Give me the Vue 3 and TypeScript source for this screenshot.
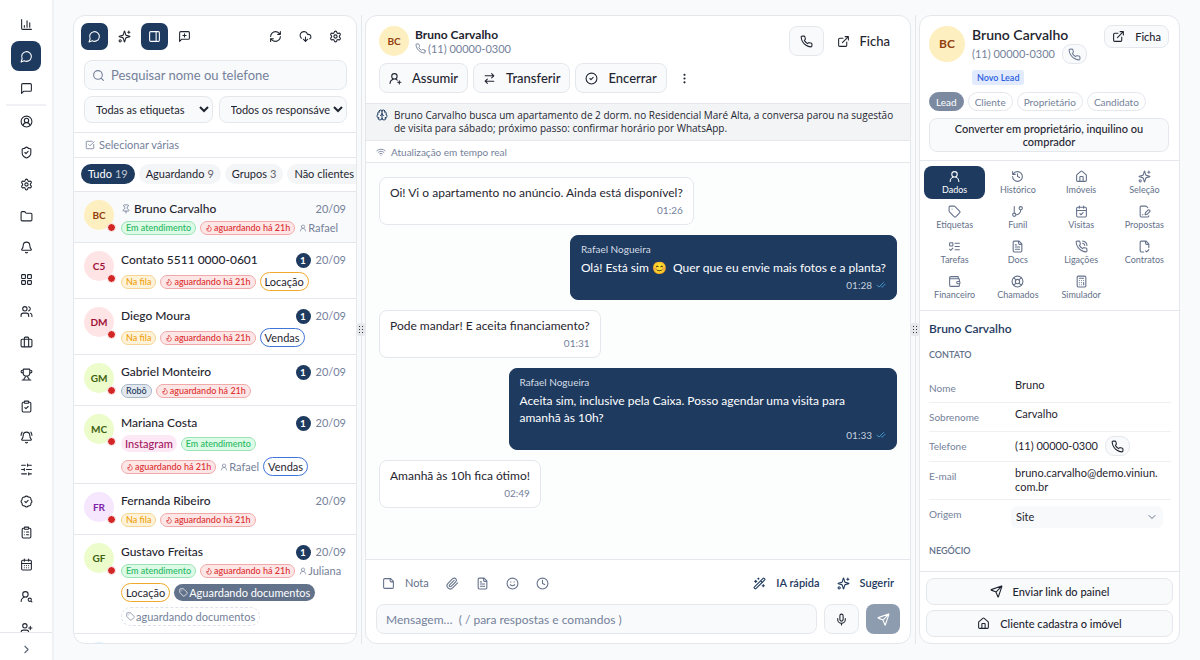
<script setup lang="ts">
import { h, ref } from 'vue'

const circle = (x: number, y: number, r: number): string =>
  `M${x - r} ${y}a${r} ${r} 0 1 0 ${r * 2} 0a${r} ${r} 0 1 0 ${-r * 2} 0`
const box = (x: number, y: number, w: number, t: number, r: number): string =>
  `M${x + r} ${y}h${w - 2 * r}a${r} ${r} 0 0 1 ${r} ${r}v${t - 2 * r}a${r} ${r} 0 0 1 ${-r} ${r}h${2 * r - w}a${r} ${r} 0 0 1 ${-r} ${-r}v${2 * r - t}a${r} ${r} 0 0 1 ${r} ${-r}`

const bubble = 'M21 15a2 2 0 0 1-2 2H7l-4 4V5a2 2 0 0 1 2-2h14a2 2 0 0 1 2 2z'
const clip = box(8, 2, 8, 4, 1) + 'M16 4h2a2 2 0 0 1 2 2v14a2 2 0 0 1-2 2H6a2 2 0 0 1-2-2V6a2 2 0 0 1 2-2h2'
const bell = 'M10.268 21a2 2 0 0 0 3.464 0M3.262 15.326A1 1 0 0 0 4 17h16a1 1 0 0 0 .74-1.673C19.41 13.956 18 12.499 18 8A6 6 0 0 0 6 8c0 4.499-1.411 5.956-2.738 7.326'
const calendar = 'M8 2v4M16 2v4M3 10h18' + box(3, 4, 18, 18, 2)
const phone = 'M22 16.92v3a2 2 0 0 1-2.18 2 19.79 19.79 0 0 1-8.63-3.07 19.5 19.5 0 0 1-6-6 19.79 19.79 0 0 1-3.07-8.67A2 2 0 0 1 4.11 2h3a2 2 0 0 1 2 1.72 12.84 12.84 0 0 0 .7 2.81 2 2 0 0 1-.45 2.11L8.09 9.91a16 16 0 0 0 6 6l1.27-1.27a2 2 0 0 1 2.11-.45 12.84 12.84 0 0 0 2.81.7A2 2 0 0 1 22 16.92z'

const icons: Record<string, string> = {
  chart: 'M3 3v16a2 2 0 0 0 2 2h16M18 17V9M13 17V5M8 17v-3',
  chat: 'M7.9 20A9 9 0 1 0 4 16.1L2 22Z',
  square: bubble,
  squarePlus: bubble + 'M12 7v6M9 10h6',
  account: 'M18 20a6 6 0 0 0-12 0' + circle(12, 10, 4) + circle(12, 12, 10),
  shield: 'M20 13c0 5-3.5 7.5-7.66 8.95a1 1 0 0 1-.67-.01C7.5 20.5 4 18 4 13V6a1 1 0 0 1 1-1c2 0 4.5-1.2 6.24-2.72a1.17 1.17 0 0 1 1.52 0C14.51 3.81 17 5 19 5a1 1 0 0 1 1 1zM9 12l2 2 4-4',
  gear: 'M9.671 4.136a2.34 2.34 0 0 1 4.659 0 2.34 2.34 0 0 0 3.319 1.915 2.34 2.34 0 0 1 2.33 4.033 2.34 2.34 0 0 0 0 3.831 2.34 2.34 0 0 1-2.33 4.033 2.34 2.34 0 0 0-3.319 1.915 2.34 2.34 0 0 1-4.659 0 2.34 2.34 0 0 0-3.32-1.915 2.34 2.34 0 0 1-2.33-4.033 2.34 2.34 0 0 0 0-3.831A2.34 2.34 0 0 1 6.35 6.051a2.34 2.34 0 0 0 3.319-1.915' + circle(12, 12, 3),
  folder: 'M20 20a2 2 0 0 0 2-2V8a2 2 0 0 0-2-2h-7.9a2 2 0 0 1-1.69-.9L9.6 3.9A2 2 0 0 0 7.93 3H4a2 2 0 0 0-2 2v13a2 2 0 0 0 2 2Z',
  bell,
  bellRing: bell + 'M22 8c0-2.3-.8-4.3-2-6M4 2C2.8 3.7 2 5.7 2 8',
  grid: box(3, 3, 7, 7, 1) + box(14, 3, 7, 7, 1) + box(14, 14, 7, 7, 1) + box(3, 14, 7, 7, 1),
  users: 'M16 21v-2a4 4 0 0 0-4-4H6a4 4 0 0 0-4 4v2M22 21v-2a4 4 0 0 0-3-3.87M16 3.13a4 4 0 0 1 0 7.75' + circle(9, 7, 4),
  briefcase: 'M16 20V4a2 2 0 0 0-2-2h-4a2 2 0 0 0-2 2v16' + box(2, 6, 20, 14, 2),
  trophy: 'M10 14.66v1.626a2 2 0 0 1-.976 1.696A5 5 0 0 0 7 21.978M14 14.66v1.626a2 2 0 0 0 .976 1.696A5 5 0 0 1 17 21.978M18 9h1.5a1 1 0 0 0 0-5H18M4 22h16M6 9a6 6 0 0 0 12 0V3a1 1 0 0 0-1-1H7a1 1 0 0 0-1 1zM6 9H4.5a1 1 0 0 1 0-5H6',
  clipCheck: clip + 'M9 14l2 2 4-4',
  clipList: clip + 'M12 11h4M12 16h4M8 11h.01M8 16h.01',
  sliders: 'M21 4h-7M10 4H3M21 12h-9M8 12H3M21 20h-5M12 20H3M14 2v4M8 10v4M16 18v4',
  badge: 'M3.85 8.62a4 4 0 0 1 4.78-4.77 4 4 0 0 1 6.74 0 4 4 0 0 1 4.78 4.78 4 4 0 0 1 0 6.74 4 4 0 0 1-4.77 4.78 4 4 0 0 1-6.75 0 4 4 0 0 1-4.78-4.77 4 4 0 0 1 0-6.76ZM9 12l2 2 4-4',
  calendar: calendar + 'M8 14h.01M12 14h.01M16 14h.01M8 18h.01M12 18h.01M16 18h.01',
  calendarCheck: calendar + 'M9 16l2 2 4-4',
  userSearch: 'M2 21a8 8 0 0 1 10.434-7.62M22 22l-1.9-1.9' + circle(10, 8, 5) + circle(18, 18, 3),
  userAdd: 'M16 21v-2a4 4 0 0 0-4-4H6a4 4 0 0 0-4 4v2M19 8v6M22 11h-6' + circle(9, 7, 4),
  userPlus: 'M2 21a8 8 0 0 1 13.292-6M19 16v6M22 19h-6' + circle(10, 8, 5),
  user: 'M20 21a8 8 0 0 0-16 0' + circle(12, 8, 5),
  chevronRight: 'M9 18l6-6-6-6',
  chevronDown: 'M6 9l6 6 6-6',
  sparkles: 'M9.937 15.5A2 2 0 0 0 8.5 14.063l-6.135-1.582a.5.5 0 0 1 0-.962L8.5 9.936A2 2 0 0 0 9.937 8.5l1.582-6.135a.5.5 0 0 1 .963 0L14.063 8.5A2 2 0 0 0 15.5 9.937l6.135 1.581a.5.5 0 0 1 0 .964L15.5 14.063a2 2 0 0 0-1.437 1.437l-1.582 6.135a.5.5 0 0 1-.963 0zM20 2v4M22 4h-4' + circle(4, 20, 2),
  panel: box(3, 3, 18, 18, 2) + 'M15 3v18',
  refresh: 'M3 12a9 9 0 0 1 9-9 9.75 9.75 0 0 1 6.74 2.74L21 8M21 3v5h-5M21 12a9 9 0 0 1-9 9 9.75 9.75 0 0 1-6.74-2.74L3 16M8 16H3v5',
  cloud: 'M12 13v8l-4-4M12 21l4-4M4.393 15.269A7 7 0 1 1 15.71 8h1.79a4.5 4.5 0 0 1 2.436 8.284',
  search: circle(11, 11, 8) + 'M21 21l-4.3-4.3',
  select: 'M21 10.5V19a2 2 0 0 1-2 2H5a2 2 0 0 1-2-2V5a2 2 0 0 1 2-2h12.5M9 11l3 3L22 4',
  pin: 'M12 17v5M9 10.76a2 2 0 0 1-1.11 1.79l-1.78.9A2 2 0 0 0 5 15.24V16a1 1 0 0 0 1 1h12a1 1 0 0 0 1-1v-.76a2 2 0 0 0-1.11-1.79l-1.78-.9A2 2 0 0 1 15 10.76V7a1 1 0 0 1 1-1 2 2 0 0 0 0-4H8a2 2 0 0 0 0 4 1 1 0 0 1 1 1z',
  flame: 'M8.5 14.5A2.5 2.5 0 0 0 11 12c0-1.38-.5-2-1-3-1.072-2.143-.224-4.054 2-6 .5 2.5 2 4.9 4 6.5 2 1.6 3 3.5 3 5.5a7 7 0 1 1-14 0c0-1.153.433-2.294 1-3a2.5 2.5 0 0 0 2.5 2.5z',
  tag: 'M12.586 2.586A2 2 0 0 0 11.172 2H4a2 2 0 0 0-2 2v7.172a2 2 0 0 0 .586 1.414l8.704 8.704a2.426 2.426 0 0 0 3.42 0l6.58-6.58a2.426 2.426 0 0 0 0-3.42zM7.5 7.5h.01',
  phone,
  phoneCall: phone + 'M14.05 2a9 9 0 0 1 8 7.94M14.05 6A5 5 0 0 1 18 10',
  external: 'M15 3h6v6M10 14 21 3M18 13v6a2 2 0 0 1-2 2H5a2 2 0 0 1-2-2V8a2 2 0 0 1 2-2h6',
  swap: 'M16 3l4 4-4 4M20 7H4M8 21l-4-4 4-4M4 17h16',
  done: circle(12, 12, 10) + 'M9 12l2 2 4-4',
  more: circle(12, 5, 1) + circle(12, 12, 1) + circle(12, 19, 1),
  brain: 'M12 18V5M15 13a4.17 4.17 0 0 1-3-4 4.17 4.17 0 0 1-3 4M17.598 6.5A3 3 0 1 0 12 5a3 3 0 1 0-5.598 1.5M17.997 5.125a4 4 0 0 1 2.526 5.77M18 18a4 4 0 0 0 2-7.464M19.967 17.483A4 4 0 1 1 12 18a4 4 0 1 1-7.967-.517M6 18a4 4 0 0 1-2-7.464M6.003 5.125a4 4 0 0 0-2.526 5.77',
  wifi: 'M12 20h.01M2 8.82a15 15 0 0 1 20 0M5 12.859a10 10 0 0 1 14 0M8.5 16.429a5 5 0 0 1 7 0',
  checks: 'M18 6 7 17l-5-5M22 10l-7.5 7.5L13 16',
  note: 'M16 3H5a2 2 0 0 0-2 2v14a2 2 0 0 0 2 2h14a2 2 0 0 0 2-2V8ZM15 3v4a2 2 0 0 0 2 2h4',
  paperclip: 'M21.44 11.05l-9.19 9.19a6 6 0 0 1-8.49-8.49l8.57-8.57A4 4 0 1 1 18 8.84l-8.59 8.57a2 2 0 0 1-2.83-2.83l8.49-8.48',
  file: 'M15 2H6a2 2 0 0 0-2 2v16a2 2 0 0 0 2 2h12a2 2 0 0 0 2-2V7ZM14 2v4a2 2 0 0 0 2 2h4M10 9H8M16 13H8M16 17H8',
  smile: circle(12, 12, 10) + 'M8 14s1.5 2 4 2 4-2 4-2M9 9h.01M15 9h.01',
  clock: circle(12, 12, 10) + 'M12 6v6l4 2',
  wand: 'M21.64 3.64l-1.28-1.28a1.21 1.21 0 0 0-1.72 0L2.36 18.64a1.21 1.21 0 0 0 0 1.72l1.28 1.28a1.2 1.2 0 0 0 1.72 0L21.64 5.36a1.2 1.2 0 0 0 0-1.72M14 7l3 3M5 6v4M19 14v4M10 2v2M7 8H3M21 16h-4M11 3H9',
  mic: 'M12 2a3 3 0 0 0-3 3v7a3 3 0 0 0 6 0V5a3 3 0 0 0-3-3ZM19 10v2a7 7 0 0 1-14 0v-2M12 19v3',
  send: 'M14.536 21.686a.5.5 0 0 0 .937-.024l6.5-19a.496.496 0 0 0-.635-.635l-19 6.5a.5.5 0 0 0-.024.937l7.93 3.18a2 2 0 0 1 1.112 1.11zM21.854 2.147l-10.94 10.939',
  history: 'M3 12a9 9 0 1 0 9-9 9.75 9.75 0 0 0-6.74 2.74L3 8M3 3v5h5M12 7v5l4 2',
  house: 'M15 21v-8a1 1 0 0 0-1-1h-4a1 1 0 0 0-1 1v8M3 10a2 2 0 0 1 .709-1.528l7-5.999a2 2 0 0 1 2.582 0l7 5.999A2 2 0 0 1 21 10v9a2 2 0 0 1-2 2H5a2 2 0 0 1-2-2z',
  branch: 'M6 3v12M18 9a9 9 0 0 1-9 9' + circle(18, 6, 3) + circle(6, 18, 3),
  filePen: 'M18 5l-2.414-2.414A2 2 0 0 0 14.172 2H6a2 2 0 0 0-2 2v16a2 2 0 0 0 2 2h12a2 2 0 0 0 2-2M21.378 12.626a1 1 0 0 0-3.004-3.004l-4.01 4.012a2 2 0 0 0-.506.854l-.837 2.87a.5.5 0 0 0 .62.62l2.87-.837a2 2 0 0 0 .854-.506zM8 18h1',
  todo: box(3, 5, 6, 6, 1) + 'M3 17l2 2 4-4M13 6h8M13 12h8M13 18h8',
  fileCheck: 'M10.5 22H6a2 2 0 0 1-2-2V4a2 2 0 0 1 2-2h9l5 5v7M14 2v4a2 2 0 0 0 2 2h4M14 20l2 2 4-4',
  wallet: 'M19 7V4a1 1 0 0 0-1-1H5a2 2 0 0 0 0 4h15a1 1 0 0 1 1 1v4h-3a2 2 0 0 0 0 4h3a1 1 0 0 0 1-1v-2a1 1 0 0 0-1-1M3 5v14a2 2 0 0 0 2 2h15a1 1 0 0 0 1-1v-4',
  buoy: circle(12, 12, 10) + circle(12, 12, 4) + 'M4.93 4.93l4.24 4.24M14.83 9.17l4.24-4.24M14.83 14.83l4.24 4.24M9.17 14.83l-4.24 4.24',
  calculator: box(4, 2, 16, 20, 2) + 'M8 6h8M16 14v4M16 10h.01M12 10h.01M8 10h.01M12 14h.01M8 14h.01M12 18h.01M8 18h.01',
}

const Icon = (props: { name: string; size?: number }) =>
  h('svg', { width: props.size ?? 13, height: props.size ?? 13, viewBox: '0 0 24 24', 'aria-hidden': 'true', class: 'icon' }, [
    h('path', { d: icons[props.name] }),
  ])
Icon.props = ['name', 'size']

const navTop = [
  { icon: 'chart', label: 'Painel' },
  { icon: 'chat', label: 'Conversas' },
  { icon: 'square', label: 'Mensagens' },
]
const navMain = ['account', 'shield', 'gear', 'folder', 'bell', 'grid', 'users', 'briefcase', 'trophy', 'clipCheck', 'bellRing', 'sliders', 'badge', 'clipList', 'calendar', 'userSearch', 'userAdd']

interface Tag { kind: string; text: string; icon?: string; size?: number }
interface Chat { initials: string; tone: string; name: string; pinned?: boolean; unread?: number; tags: Tag[] }

const active: Tag = { kind: 'green', text: 'Em atendimento' }
const queue: Tag = { kind: 'amber', text: 'Na fila' }
const waiting: Tag = { kind: 'red', text: 'aguardando há 21h', icon: 'flame', size: 8 }
const agent = (text: string): Tag => ({ kind: 'agent', text, icon: 'user', size: 8 })
const rent: Tag = { kind: 'rent', text: 'Locação' }
const sale: Tag = { kind: 'sale', text: 'Vendas' }

const chats: Chat[] = [
  { initials: 'BC', tone: 'yellow', name: 'Bruno Carvalho', pinned: true, tags: [active, waiting, agent('Rafael')] },
  { initials: 'C5', tone: 'rose', name: 'Contato 5511 0000-0601', unread: 1, tags: [queue, waiting, rent] },
  { initials: 'DM', tone: 'rose', name: 'Diego Moura', unread: 1, tags: [queue, waiting, sale] },
  { initials: 'GM', tone: 'lime', name: 'Gabriel Monteiro', unread: 1, tags: [{ kind: 'robot', text: 'Robô' }, waiting] },
  { initials: 'MC', tone: 'lime', name: 'Mariana Costa', unread: 1, tags: [{ kind: 'insta', text: 'Instagram' }, active, waiting, agent('Rafael'), sale] },
  { initials: 'FR', tone: 'purple', name: 'Fernanda Ribeiro', tags: [queue, waiting] },
  { initials: 'GF', tone: 'lime', name: 'Gustavo Freitas', unread: 1, tags: [active, waiting, agent('Juliana'), rent, { kind: 'solid', text: 'Aguardando documentos', icon: 'tag', size: 9 }, { kind: 'dashed', text: 'aguardando documentos', icon: 'tag', size: 9 }] },
  { initials: '', tone: 'sky', name: '', tags: [] },
]

const filters = [
  { text: 'Tudo', count: 19 },
  { text: 'Aguardando', count: 9 },
  { text: 'Grupos', count: 3 },
  { text: 'Não clientes', count: 1 },
]
const filter = ref('Tudo')

const messages = [
  { text: 'Oi! Vi o apartamento no anúncio. Ainda está disponível?', time: '01:26' },
  { own: true, text: 'Olá! Está sim 😊\u00a0 Quer que eu envie mais fotos e a planta?', time: '01:28' },
  { text: 'Pode mandar! E aceita financiamento?', time: '01:31' },
  { own: true, text: 'Aceita sim, inclusive pela Caixa. Posso agendar uma visita para amanhã às 10h?', time: '01:33' },
  { text: 'Amanhã às 10h fica ótimo!', time: '02:49' },
]

const tabs = [
  ['user', 'Dados'], ['history', 'Histórico'], ['house', 'Imóveis'], ['sparkles', 'Seleção'],
  ['tag', 'Etiquetas'], ['branch', 'Funil'], ['calendarCheck', 'Visitas'], ['filePen', 'Propostas'],
  ['todo', 'Tarefas'], ['file', 'Docs'], ['phoneCall', 'Ligações'], ['fileCheck', 'Contratos'],
  ['wallet', 'Financeiro'], ['buoy', 'Chamados'], ['calculator', 'Simulador'],
]
const tab = ref('Dados')
const roles = ['Lead', 'Cliente', 'Proprietário', 'Candidato']
const query = ref('')
const draft = ref('')
</script>

<template>
  <div class="app">
    <aside class="rail">
      <nav class="rail-nav" aria-label="Principal">
        <div class="rail-top">
          <button v-for="n in navTop" :key="n.icon" class="rail-btn" :class="{ on: n.icon === 'chat' }" :aria-label="n.label"><Icon :name="n.icon" /></button>
        </div>
        <div class="rail-scroll">
          <div class="rail-main">
            <button v-for="n in navMain" :key="n" class="rail-btn" :aria-label="n"><Icon :name="n" /></button>
          </div>
        </div>
      </nav>
      <button class="rail-toggle" aria-label="Expandir"><Icon name="chevronRight" /></button>
    </aside>

    <main class="board">
      <section class="panel inbox">
        <div class="tools">
          <button class="tool on" aria-label="Conversas"><Icon name="chat" /></button>
          <button class="tool" aria-label="IA"><Icon name="sparkles" /></button>
          <button class="tool on" aria-label="Painel lateral"><Icon name="panel" /></button>
          <button class="tool push" aria-label="Nova conversa"><Icon name="squarePlus" /></button>
          <button class="tool" aria-label="Atualizar"><Icon name="refresh" /></button>
          <button class="tool" aria-label="Importar"><Icon name="cloud" /></button>
          <button class="tool" aria-label="Configurações"><Icon name="gear" /></button>
        </div>
        <div class="finder">
          <label class="search"><Icon name="search" /><input v-model="query" type="text" placeholder="Pesquisar nome ou telefone" aria-label="Pesquisar nome ou telefone" /></label>
          <div class="selects">
            <select aria-label="Etiquetas"><option>Todas as etiquetas</option></select>
            <select aria-label="Responsáveis"><option>Todos os responsáveis</option></select>
          </div>
        </div>
        <button class="multi"><Icon name="select" :size="10" />Selecionar várias</button>
        <div class="filters">
          <button v-for="f in filters" :key="f.text" class="filter" :class="{ on: filter === f.text }" @click="filter = f.text">{{ f.text }} <span class="count">{{ f.count }}</span></button>
        </div>
        <ul class="list">
          <li v-for="(c, i) in chats" :key="i" class="chat" :class="{ current: i === 0 }">
            <div class="face"><span class="avatar" :class="c.tone">{{ c.initials }}</span><span v-if="c.name" class="dot"></span></div>
            <div v-if="c.name" class="chat-body">
              <div class="chat-head">
                <Icon v-if="c.pinned" name="pin" :size="10" class="pin" />
                <span class="chat-name">{{ c.name }}</span>
                <span v-if="c.unread" class="unread">{{ c.unread }}</span>
                <time class="date">20/09</time>
              </div>
              <div class="tags">
                <span v-for="t in c.tags" :key="t.kind + t.text" class="tag" :class="t.kind"><Icon v-if="t.icon" :name="t.icon" :size="t.size" />{{ t.text }}</span>
              </div>
            </div>
          </li>
        </ul>
      </section>

      <div class="gutter"><span class="grip"><i v-for="n in 6" :key="n"></i></span></div>

      <section class="panel talk">
        <header class="talk-head">
          <div class="who">
            <span class="avatar yellow">BC</span>
            <div class="who-text">
              <h1 class="who-name">Bruno Carvalho</h1>
              <p class="who-phone"><Icon name="phone" :size="11" />(11) 00000-0300</p>
            </div>
            <button class="btn call" aria-label="Ligar"><Icon name="phone" /></button>
            <button class="plain"><Icon name="external" />Ficha</button>
          </div>
          <div class="actions">
            <button class="btn"><Icon name="userPlus" />Assumir</button>
            <button class="btn"><Icon name="swap" />Transferir</button>
            <button class="btn"><Icon name="done" />Encerrar</button>
            <button class="more" aria-label="Mais"><Icon name="more" /></button>
          </div>
        </header>
        <div class="brief"><Icon name="brain" :size="12" /><p>Bruno Carvalho busca um apartamento de 2 dorm. no Residencial Maré Alta, a conversa parou na sugestão de visita para sábado; próximo passo: confirmar horário por WhatsApp.</p></div>
        <div class="live"><Icon name="wifi" :size="10" />Atualização em tempo real</div>
        <div class="thread">
          <article v-for="m in messages" :key="m.time" class="msg" :class="{ own: m.own }">
            <span v-if="m.own" class="author">Rafael Nogueira</span>
            <p class="msg-text">{{ m.text }}</p>
            <span class="msg-time">{{ m.time }}<Icon v-if="m.own" name="checks" :size="10" class="seen" /></span>
          </article>
        </div>
        <footer class="composer">
          <div class="compose-tools">
            <button class="ctool"><Icon name="note" />Nota</button>
            <button class="ctool" aria-label="Anexar"><Icon name="paperclip" /></button>
            <button class="ctool" aria-label="Modelo"><Icon name="file" /></button>
            <button class="ctool" aria-label="Emoji"><Icon name="smile" /></button>
            <button class="ctool push" aria-label="Agendar"><Icon name="clock" /></button>
            <button class="ctool ai"><Icon name="wand" />IA rápida</button>
            <button class="ctool ai"><Icon name="sparkles" />Sugerir</button>
          </div>
          <div class="compose-row">
            <input v-model="draft" class="draft" type="text" placeholder="Mensagem…  ( / para respostas e comandos )" aria-label="Mensagem" />
            <button class="btn mic" aria-label="Gravar áudio"><Icon name="mic" /></button>
            <button class="btn send" aria-label="Enviar"><Icon name="send" /></button>
          </div>
        </footer>
      </section>

      <div class="gutter"><span class="grip"><i v-for="n in 6" :key="n"></i></span></div>

      <section class="panel record">
        <header class="rec-head">
          <div class="rec-top">
            <span class="avatar big yellow">BC</span>
            <div class="rec-id">
              <h2 class="rec-name">Bruno Carvalho</h2>
              <div class="rec-phone">(11) 00000-0300<button class="pill" aria-label="Ligar"><Icon name="phone" /></button></div>
              <span class="stage">Novo Lead</span>
            </div>
            <button class="btn small"><Icon name="external" />Ficha</button>
          </div>
          <div class="roles"><button v-for="(r, i) in roles" :key="r" class="role" :class="{ on: i === 0 }">{{ r }}</button></div>
          <button class="btn convert">Converter em proprietário, inquilino ou comprador</button>
        </header>
        <div class="tabs">
          <button v-for="t in tabs" :key="t[1]" class="tab" :class="{ on: tab === t[1] }" @click="tab = t[1]"><Icon :name="t[0]" />{{ t[1] }}</button>
        </div>
        <div class="fields">
          <h3 class="fields-title">Bruno Carvalho</h3>
          <h4 class="group">Contato</h4>
          <dl class="rows">
            <div class="row"><dt>Nome</dt><dd>Bruno</dd></div>
            <div class="row"><dt>Sobrenome</dt><dd>Carvalho</dd></div>
            <div class="row"><dt>Telefone</dt><dd class="with-btn">(11) 00000-0300<button class="pill" aria-label="Ligar"><Icon name="phone" /></button></dd></div>
            <div class="row"><dt>E-mail</dt><dd>bruno.carvalho@demo.viniun.<wbr />com.br</dd></div>
            <div class="row last"><dt><label for="origin">Origem</label></dt><dd class="with-select"><select id="origin" class="origin"><option>Site</option></select><Icon name="chevronDown" :size="12" class="caret" /></dd></div>
          </dl>
          <h4 class="group">Negócio</h4>
        </div>
        <footer class="rec-foot">
          <button class="btn"><Icon name="send" />Enviar link do painel</button>
          <button class="btn"><Icon name="house" />Cliente cadastra o imóvel</button>
        </footer>
      </section>
    </main>
  </div>
</template>

<style>
body { margin: 0; background: #f9fafc; }
</style>

<style scoped>
.app, .app * { box-sizing: border-box; }
.app {
  --navy: #1e3a5f;
  --ink: #1f2530;
  --muted: #74819a;
  --line: #e4e7ec;
  display: flex; height: 100vh; overflow: hidden;
  font-family: Lato, "Open Sans", sans-serif; font-size: 11px; line-height: 14px; color: var(--ink);
}
h1, h2, h3, h4, p, ul, dl, dd { margin: 0; padding: 0; }
button, input, select { font: inherit; color: inherit; }
button { display: inline-flex; align-items: center; justify-content: center; padding: 0; border: 0; background: none; white-space: nowrap; cursor: pointer; }
.icon { flex: none; fill: none; stroke: currentColor; stroke-width: 2; stroke-linecap: round; stroke-linejoin: round; }
.push { margin-right: auto; }

.rail { flex: none; width: 54px; display: flex; flex-direction: column; background: #fff; border-right: 2px solid #eff1f4; }
.rail-nav { flex: 1; min-height: 0; display: flex; flex-direction: column; }
.rail-top { flex: none; display: flex; flex-direction: column; align-items: center; gap: 2px; margin: 0 6px; padding: 9px 0 1px; border-bottom: 2px solid #eff1f4; }
.rail-btn { width: 30px; height: 30px; border-radius: 8px; }
.rail-btn.on { background: var(--navy); color: #fff; }
.rail-scroll { flex: 1; min-height: 0; overflow: hidden; }
.rail-main { height: calc(100% + 11px); display: flex; flex-direction: column; justify-content: space-between; align-items: center; }
.rail-toggle { flex: none; height: 28px; border-top: 1px solid var(--line); color: #5b6575; padding-top: 6px; }

.board { flex: 1; min-width: 0; display: grid; grid-template-columns: 284px 8px minmax(0, 1fr) 8px 261px; padding: 15px 20px 16px 19px; }
.panel { min-width: 0; min-height: 0; display: flex; flex-direction: column; overflow: hidden; background: #fff; border: 1px solid var(--line); border-radius: 12px; }
.gutter { display: flex; align-items: center; justify-content: center; background: linear-gradient(var(--line), var(--line)) center / 1px 100% no-repeat; }
.grip { display: grid; grid-template-columns: 1px 1px; gap: 2px; padding: 3px 2px; background: #e6e8ec; border-radius: 2px; }
.grip i { width: 1px; height: 1px; background: #333; }

.tools { display: flex; gap: 3px; padding: 7px 7px 0; }
.tool { width: 27px; height: 27px; border-radius: 7px; }
.tool.on { background: var(--navy); color: #fff; }
.finder { padding: 10px 9px 9px 10px; border-bottom: 1px solid var(--line); }
.search { display: flex; align-items: center; gap: 6px; height: 30px; padding: 0 7px; background: #f9fafc; border: 1px solid var(--line); border-radius: 8px; color: var(--muted); }
.search input { flex: 1; min-width: 0; padding: 0; border: 0; outline: 0; background: none; font-size: 13px; color: var(--ink); }
input::placeholder { color: var(--muted); opacity: 1; }
.selects { display: grid; grid-template-columns: 1fr 1fr; gap: 6px; margin-top: 6px; }
.selects select { min-width: 0; height: 27px; padding: 0 0 0 7px; border: 1px solid var(--line); border-radius: 8px; background-color: #f9fafc; font-size: 11px; }
.multi { flex: none; justify-content: flex-start; gap: 4px; height: 25px; padding: 0 11px; border-bottom: 1px solid var(--line); color: var(--muted); }
.filters { flex: none; display: flex; gap: 4px; height: 34px; padding: 6px 7px; border-bottom: 1px solid var(--line); overflow: hidden; }
.filter { flex: none; height: 20px; padding: 0 7px; gap: 3px; border-radius: 10px; background: #f3f5f7; }
.filter .count { opacity: .7; }
.filter.on { background: var(--navy); color: #fff; }
.list { flex: 1; min-height: 0; overflow: hidden; list-style: none; }
.chat { display: flex; gap: 7px; padding: 7px 10px; border-bottom: 1px solid var(--line); }
.chat.current { background: #f9fafb; }
.face { position: relative; flex: none; width: 30px; height: 31px; padding-top: 1px; }
.avatar { flex: none; display: flex; align-items: center; justify-content: center; width: 30px; height: 30px; border-radius: 50%; font-weight: 700; font-size: 10px; }
.avatar.big { width: 36px; height: 36px; font-size: 12px; }
.yellow { background: #feefc0; color: #92400e; }
.rose { background: #ffe4e6; color: #9f1239; }
.lime { background: #ecfccb; color: #3f6212; }
.purple { background: #f6e7ff; color: #7e22a8; }
.sky { background: #e0f2fe; color: #075985; }
.dot { position: absolute; right: -2px; bottom: -2px; width: 9px; height: 9px; border: 1px solid #fff; border-radius: 50%; background: #d32626; }
.chat-body { flex: 1; min-width: 0; }
.chat-head { display: flex; align-items: center; height: 20px; }
.pin { margin-right: 3px; color: var(--muted); }
.chat-name { flex: 1; font-size: 12px; font-weight: 500; }
.unread { width: 15px; height: 15px; margin-right: 5px; border-radius: 50%; background: var(--navy); color: #fff; font-size: 10px; font-weight: 700; line-height: 15px; text-align: center; }
.date { color: var(--muted); }
.tags { display: flex; flex-wrap: wrap; align-items: center; gap: 5px 4px; margin-top: 2px; }
.tag { display: inline-flex; align-items: center; gap: 1px; height: 14px; padding: 0 4px; border: 1px solid; border-radius: 10px; font-size: 9px; font-weight: 500; white-space: nowrap; }
.green { background: #dcfae6; border-color: #9be3b4; color: #27b961; }
.amber { background: #fef3d9; border-color: #f6d492; color: #f0a00f; }
.red { background: #fde6e6; border-color: #f2a9a9; color: #dc2f2f; }
.robot { background: #e3e8ee; border-color: #a9b6c6; color: var(--navy); }
.insta { height: 17px; border: 0; background: #fde8f5; color: #a3175f; font-size: 11px; }
.agent { padding: 0; border: 0; color: var(--muted); font-size: 11px; font-weight: 400; }
.rent, .sale, .solid, .dashed { height: 19px; font-size: 11px; font-weight: 400; }
.rent { border-color: #f0a92c; }
.sale { border-color: #3f74d9; }
.solid { height: 17px; border: 0; padding: 0 5px; background: #62728b; color: #fff; }
.dashed { border-style: dashed; border-color: #dde2e9; color: var(--muted); }

.btn { gap: 10px; height: 30px; padding: 0 9px; border: 1px solid var(--line); border-radius: 8px; background: #f9fafc; font-size: 13px; font-weight: 500; }
.talk-head { padding: 10px 13px; border-bottom: 1px solid var(--line); }
.who { display: flex; align-items: center; gap: 6px; }
.who-text { flex: 1; }
.who-name { font-size: 12px; line-height: 15px; font-weight: 700; }
.who-phone { display: flex; align-items: center; gap: 2px; color: var(--muted); }
.call { width: 35px; padding: 0; }
.plain { gap: 10px; padding: 0 7px; font-size: 13px; font-weight: 500; }
.actions { display: flex; gap: 5px; margin-top: 7px; }
.more { width: 26px; }
.more .icon { fill: currentColor; }
.brief { display: flex; gap: 6px; padding: 5px 10px; background: #f2f4f6; border-bottom: 1px solid var(--line); font-family: "Open Sans", sans-serif; line-height: 13px; font-size: 10px; }
.brief .icon { color: var(--navy); }
.live { display: flex; align-items: center; gap: 5px; height: 22px; padding: 0 10px; border-bottom: 1px solid var(--line); color: var(--muted); font-size: 10px; }
.thread { flex: 1; min-height: 0; display: flex; flex-direction: column; align-items: flex-start; gap: 10px; padding: 14px 13px; overflow: hidden; background: #fcfdfd; border-bottom: 1px solid var(--line); }
.msg { display: flex; flex-direction: column; max-width: 75%; padding: 6px 10px 7px; border: 1px solid var(--line); border-radius: 8px; background: #fff; }
.own { align-self: flex-end; background: var(--navy); border-color: var(--navy); color: #fff; }
.author { margin-bottom: 3px; font-size: 10px; color: #d5dce6; }
.msg-text { font-size: 12px; line-height: 17px; }
.msg-time { display: flex; align-items: center; justify-content: flex-end; gap: 4px; margin-top: 2px; font-size: 10px; color: var(--muted); }
.own .msg-time { color: #c6d0dd; }
.msg-time .seen { color: #4ba3e3; }
.composer { padding: 13px 10px 9px; }
.compose-tools { display: flex; height: 20px; }
.ctool { gap: 10px; padding: 0 6px; margin-right: 5px; color: #64718a; }
.ctool.push { margin-right: auto; }
.ctool:last-child { margin-right: 0; }
.ctool.ai { color: var(--navy); font-weight: 600; }
.compose-row { display: flex; gap: 7px; margin-top: 11px; }
.draft { flex: 1; min-width: 0; height: 30px; padding: 0 9px; border: 1px solid var(--line); border-radius: 8px; background: #f9fafc; font-size: 12px; white-space: pre; }
.mic, .send { width: 35px; padding: 0; }
.send { width: 34px; border: 0; background: #8e9caf; color: #fff; }

.rec-head { padding: 9px 10px 8px 9px; border-bottom: 1px solid var(--line); }
.rec-top { display: flex; gap: 7px; }
.avatar.big { margin-top: 1px; }
.rec-id { flex: 1; min-width: 0; }
.rec-name { font-size: 14px; line-height: 19px; font-weight: 600; }
.rec-phone { display: flex; align-items: center; gap: 7px; color: var(--muted); white-space: nowrap; }
.pill { width: 25px; height: 20px; border: 1px solid var(--line); border-radius: 9px; background: #f9fafc; }
.stage { display: inline-block; margin-top: 6px; padding: 0 5px; border-radius: 3px; background: #e2eafd; color: #2b5fe0; font-size: 9px; line-height: 15px; font-weight: 600; }
.small { height: 23px; padding: 0 7px; font-size: 11px; }
.roles { display: flex; gap: 4px; margin-top: 7px; }
.role { height: 19px; padding: 0 6px; border: 1px solid var(--line); border-radius: 10px; color: var(--muted); font-size: 10px; }
.role.on { background: #7b8aa1; border-color: #7b8aa1; color: #fff; }
.convert { width: 100%; height: auto; margin-top: 7px; padding: 3px 20px; white-space: normal; font-size: 11px; line-height: 13px; }
.tabs { display: grid; grid-template-columns: repeat(4, 1fr); gap: 2px; padding: 5px 4px 6px; border-bottom: 1px solid var(--line); }
.tab { flex-direction: column; gap: 1px; height: 33px; border-radius: 8px; color: #64718a; font-size: 9px; line-height: 11px; }
.tab.on { background: var(--navy); color: #fff; }
.fields { flex: 1; min-height: 0; padding: 10px 8px 0 9px; overflow: hidden; }
.fields-title { font-size: 12px; line-height: 16px; font-weight: 600; color: var(--navy); }
.group { margin-top: 11px; font-size: 9px; font-weight: 600; text-transform: uppercase; color: #64718a; }
.rows { margin-top: 12px; }
.row { display: grid; grid-template-columns: 86px minmax(0, 1fr); border-bottom: 1px solid #eef0f3; }
.row dt { padding: 7px 0; color: var(--muted); font-size: 10px; }
.row dd { padding: 4px 0 5px; font-size: 11px; }
.row .with-btn { display: flex; align-items: center; gap: 7px; }
.row.last { border: 0; }
.row .with-select { display: grid; align-items: center; padding: 6px 8px 5px 0; margin-left: -4px; }
.origin { grid-area: 1 / 1; height: 22px; padding: 0 5px; appearance: none; border: 0; border-radius: 6px; background: #f8f9fb; }
.caret { grid-area: 1 / 1; justify-self: end; margin-right: 5px; color: #64718a; pointer-events: none; }
.rec-foot { flex: none; display: grid; gap: 5px; padding: 6px; border-top: 1px solid var(--line); }
.rec-foot .btn { height: 27px; font-size: 11px; }
</style>
